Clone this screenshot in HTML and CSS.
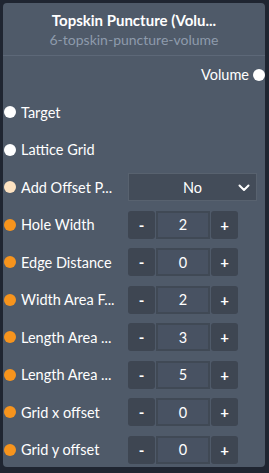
FILE: index.html
```html
<!DOCTYPE html>
<html lang="en">
<head>
  <meta charset="UTF-8" />
  <title>Topskin Puncture (Volume)</title>
  <link rel="stylesheet" href="styles.css">
</head>
<body>
  <div class="node">
    <div class="node-head">
      <div class="node-title">Topskin Puncture (Volu...</div>
      <div class="node-id">6-topskin-puncture-volume</div>
    </div>

    <div class="node-body">
      <div class="row row-out">
        <span class="label">Volume</span>
        <span class="dot dot-white"></span>
      </div>

      <div class="row">
        <span class="dot dot-white"></span>
        <span class="label">Target</span>
      </div>

      <div class="row">
        <span class="dot dot-white"></span>
        <span class="label">Lattice Grid</span>
      </div>

      <div class="row">
        <span class="dot dot-peach"></span>
        <span class="label">Add Offset P...</span>
        <div class="select">
          <span>No</span>
          <svg class="chev" width="12" height="8" viewBox="0 0 12 8"><path d="M1.5 1.5 L6 6 L10.5 1.5" fill="none" stroke="#fff" stroke-width="2" stroke-linecap="round" stroke-linejoin="round"/></svg>
        </div>
      </div>

      <div class="row">
        <span class="dot dot-orange"></span>
        <span class="label">Hole Width</span>
        <div class="stepper"><button>-</button><span class="val">2</span><button>+</button></div>
      </div>

      <div class="row">
        <span class="dot dot-orange"></span>
        <span class="label">Edge Distance</span>
        <div class="stepper"><button>-</button><span class="val">0</span><button>+</button></div>
      </div>

      <div class="row">
        <span class="dot dot-orange"></span>
        <span class="label">Width Area F...</span>
        <div class="stepper"><button>-</button><span class="val">2</span><button>+</button></div>
      </div>

      <div class="row">
        <span class="dot dot-orange"></span>
        <span class="label">Length Area ...</span>
        <div class="stepper"><button>-</button><span class="val">3</span><button>+</button></div>
      </div>

      <div class="row">
        <span class="dot dot-orange"></span>
        <span class="label">Length Area ...</span>
        <div class="stepper"><button>-</button><span class="val">5</span><button>+</button></div>
      </div>

      <div class="row">
        <span class="dot dot-orange"></span>
        <span class="label">Grid x offset</span>
        <div class="stepper"><button>-</button><span class="val">0</span><button>+</button></div>
      </div>

      <div class="row">
        <span class="dot dot-orange"></span>
        <span class="label">Grid y offset</span>
        <div class="stepper"><button>-</button><span class="val">0</span><button>+</button></div>
      </div>
    </div>
  </div>
</body>
</html>
```

FILE: styles.css
```css
body {
  margin: 0;
  padding: 3px;
  background: #1f2531;
  font-family: 'Lato', 'Open Sans', sans-serif;
  color: #fff;
}

.node {
  width: 262px;
  height: 464px;
  background: #4f5a69;
  border-radius: 4px;
  box-sizing: border-box;
  overflow: hidden;
}

.node-head {
  text-align: center;
  padding: 7px 8px 6px;
  border-bottom: 1px solid #5d6878;
}

.node-title {
  font-size: 15px;
  font-weight: bold;
  line-height: 20px;
}

.node-id {
  font-size: 14px;
  line-height: 19px;
  color: #8e9bac;
}

.node-body {
  padding: 0 1px;
}

.row {
  height: 37.5px;
  display: flex;
  align-items: center;
}

.row-out {
  justify-content: flex-end;
  margin-right: -1px;
}

.row-out .label {
  margin-right: 4px;
  width: auto;
}

.dot {
  width: 12px;
  height: 12px;
  border-radius: 50%;
  flex: none;
}

.dot-white { background: #fff; }
.dot-peach { background: #fde2c1; }
.dot-orange { background: #f7941d; }

.label {
  font-size: 14.5px;
  margin-left: 5px;
  width: 102px;
  flex: none;
  white-space: nowrap;
}

.select {
  margin-left: 5px;
  width: 129px;
  height: 28px;
  box-sizing: border-box;
  background: #434c59;
  border: 1px solid #58626f;
  display: flex;
  align-items: center;
  justify-content: center;
  position: relative;
  font-size: 14.5px;
}

.chev {
  position: absolute;
  right: 6px;
  top: 10px;
}

.stepper {
  margin-left: 5px;
  display: flex;
  height: 28px;
  gap: 1px;
}

.stepper button {
  width: 27px;
  height: 28px;
  border: none;
  border-radius: 3px;
  background: #3e4652;
  color: #fff;
  font-family: inherit;
  font-size: 15px;
  font-weight: bold;
  padding: 0;
}

.val {
  width: 54px;
  box-sizing: border-box;
  border: 2px solid #404955;
  background: #485262;
  display: flex;
  align-items: center;
  justify-content: center;
  font-size: 14.5px;
}
```
